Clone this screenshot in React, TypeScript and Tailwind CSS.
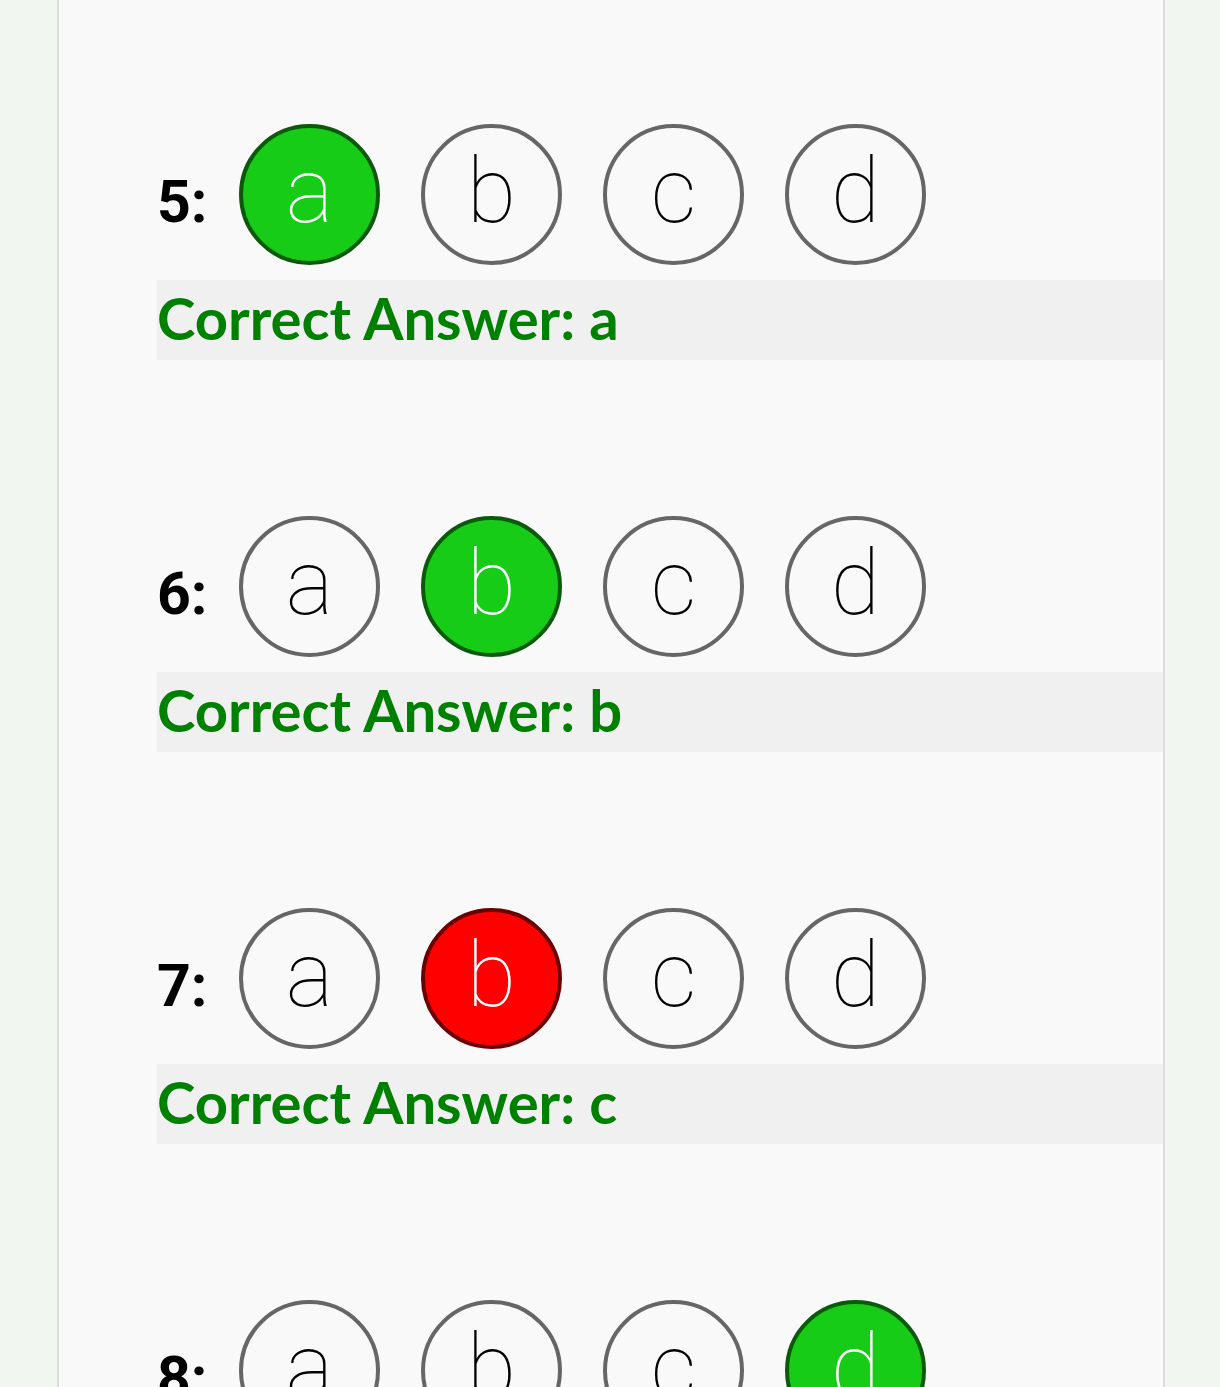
const questions = [
  { n: 5, picked: "a", correct: "a" },
  { n: 6, picked: "b", correct: "b" },
  { n: 7, picked: "b", correct: "c" },
  { n: 8, picked: "d", correct: "d" },
];

const options = ["a", "b", "c", "d"];

function Bubble({ letter, state }: { letter: string; state: "none" | "right" | "wrong" }) {
  const cls =
    state === "right"
      ? "bg-[#17cc17] border-[#0b5a0b] text-white"
      : state === "wrong"
        ? "bg-[#ff0000] border-[#6a0000] text-white"
        : "bg-transparent border-[#666666] text-black";
  return (
    <div
      className={`flex h-[141px] w-[141px] shrink-0 items-center justify-center rounded-full border-[4px] text-[90px] font-thin leading-none ${cls}`}
      style={{ fontFamily: "Roboto, sans-serif" }}
    >
      <span className="-mt-[6px]">{letter}</span>
    </div>
  );
}

export default function App() {
  return (
    <div className="flex h-[1387px] w-full justify-center overflow-hidden bg-[#f2f6f1]">
      <div className="ml-[57px] mr-[55px] w-full border-x-2 border-[#dddddd] bg-[#f9f9f9] pt-[124px] pl-[98px]">
        {questions.map((q) => (
          <div key={q.n} className="mb-[156px]">
            {/* ROW */}
            <div className="flex items-center">
              <div
                className="w-[82px] pt-[16px] text-[59px] font-bold text-black"
                style={{ fontFamily: "Roboto, sans-serif" }}
              >
                {q.n}:
              </div>
              <div className="flex gap-[41px]">
                {options.map((o) => (
                  <Bubble
                    key={o}
                    letter={o}
                    state={o !== q.picked ? "none" : q.picked === q.correct ? "right" : "wrong"}
                  />
                ))}
              </div>
            </div>

            {/* ANSWER */}
            <div
              className="mt-[15px] flex h-[80px] items-center bg-[#f0f0f0] pb-[6px] text-[58px] font-bold text-[#008000]"
              style={{ fontFamily: "Lato, sans-serif" }}
            >
              Correct Answer: {q.correct}
            </div>
          </div>
        ))}
      </div>
    </div>
  );
}
